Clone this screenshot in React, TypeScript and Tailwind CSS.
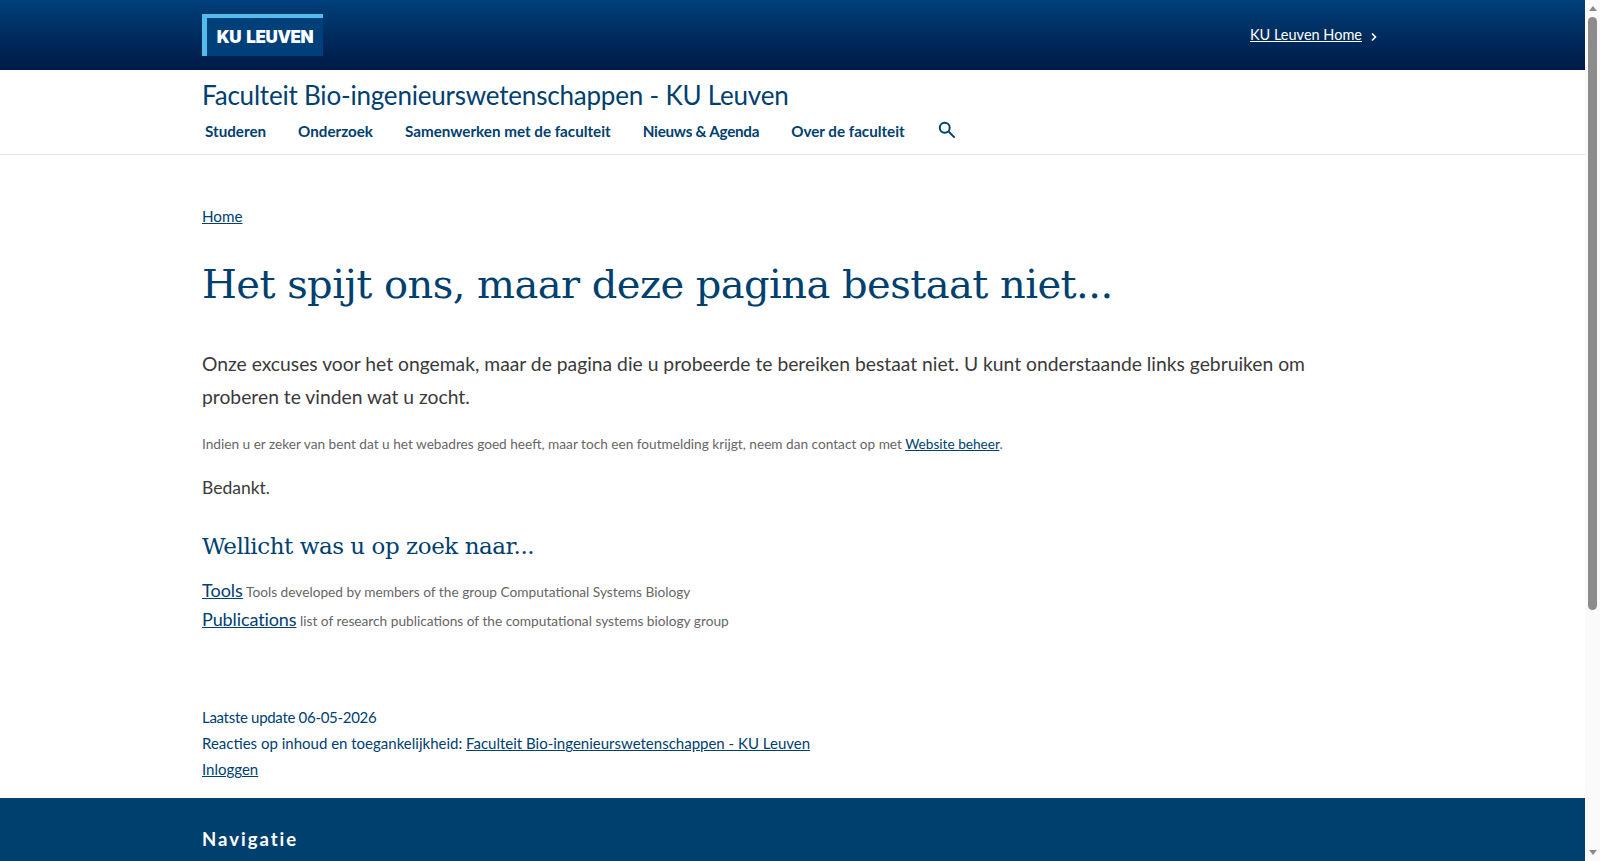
import React from "react";

const sans = "font-['Lato','Noto_Sans',sans-serif]";

export default function App() {
  return (
    <div className="flex h-[861px] w-full overflow-hidden bg-white">
      <div className={`flex h-full min-w-0 flex-1 flex-col overflow-hidden text-[#00406f] ${sans}`}>
        <header className="h-[70px] shrink-0 bg-gradient-to-b from-[#00407a] to-[#001a47]">
          <div className="flex h-full items-center justify-between pl-[202px] pr-[207px]">
            <div className="flex h-[42px] w-[121px] border-l-[5px] border-t-[4px] border-[#52bdec] bg-[#00407a] pt-[1px]">
              <span className="m-auto font-['Inter',sans-serif] text-[17px] font-black tracking-[-0.35px] text-white [word-spacing:2px]">KU LEUVEN</span>
            </div>
            <div className="flex items-center gap-[8px] text-[14.5px] text-white">
              <a className="underline">KU Leuven Home</a>
              <svg className="mt-[3px]" width="8" height="10" viewBox="0 0 8 10" fill="none" stroke="currentColor" strokeWidth="1.6"><path d="M2 1.5 5.5 5 2 8.5" /></svg>
            </div>
          </div>
        </header>
        <div className="shrink-0 border-b border-[#dce7f0] pl-[202px]">
          <div className="pt-[9px] text-[26px] leading-[32px] tracking-[-0.2px]">Faculteit Bio-ingenieurswetenschappen - KU Leuven</div>
          <nav className="mt-[4px] flex h-[39px] items-start gap-[32px] pl-[3px] text-[15.2px] font-bold">
            <span className="mt-[5px]">Studeren</span>
            <span className="mt-[5px]">Onderzoek</span>
            <span className="mt-[5px]">Samenwerken met de faculteit</span>
            <span className="mt-[5px] tracking-[-0.25px]">Nieuws &amp; Agenda</span>
            <span className="mt-[5px]">Over de faculteit</span>
            <svg className="ml-[1px] mt-[6px]" width="18" height="18" viewBox="0 0 20 20" fill="none" stroke="currentColor" strokeWidth="2.2"><circle cx="7.5" cy="7.5" r="5.5" /><path d="m12 12 6.5 6.5" /></svg>
          </nav>
        </div>
        <main className="flex-1 pl-[202px] pr-[240px]">
          <a className="mt-[50px] block text-[15.2px] underline">Home</a>
          <h1 className="mt-[28px] font-['DejaVu_Serif',serif] text-[40px] leading-[56px] tracking-[-0.55px]">Het spijt ons, maar deze pagina bestaat niet...</h1>
          <p className="mt-[35px] text-[19.3px] leading-[33.6px] text-[#3a3a3a]">Onze excuses voor het ongemak, maar de pagina die u probeerde te bereiken bestaat niet. U kunt onderstaande links gebruiken om proberen te vinden wat u zocht.</p>
          <p className="mt-[20px] text-[13.65px] text-[#666]">Indien u er zeker van bent dat u het webadres goed heeft, maar toch een foutmelding krijgt, neem dan contact op met <a className="text-[#00406f] underline">Website beheer</a>.</p>
          <p className="mt-[21px] text-[17.5px] text-[#3a3a3a]">Bedankt.</p>
          <h2 className="mt-[27px] font-['DejaVu_Serif',serif] text-[23px] tracking-[-0.45px]">Wellicht was u op zoek naar...</h2>
          <div className="mt-[14px] text-[13.7px] text-[#666]"><a className="text-[18px] text-[#00406f] underline">Tools</a> Tools developed by members of the group Computational Systems Biology</div>
          <div className="mt-[2px] text-[13.7px] text-[#666]"><a className="text-[18px] tracking-[-0.1px] text-[#00406f] underline">Publications</a> list of research publications of the computational systems biology group</div>
          <div className="mt-[71px] text-[15px] leading-[26px]">
            <div className="tracking-[-0.3px]">Laatste update 06-05-2026</div>
            <div>Reacties op inhoud en toegankelijkheid: <a className="underline">Faculteit Bio-ingenieurswetenschappen - KU Leuven</a></div>
            <a className="underline">Inloggen</a>
          </div>
        </main>
        <footer className="h-[63px] shrink-0 bg-[#00406f] pl-[202px] pt-[29px] text-[18.5px] font-bold leading-[24px] tracking-[2px] text-white">Navigatie</footer>
      </div>
      <div className="relative flex h-full w-[15px] shrink-0 flex-col items-center bg-[#fafafa]">
        <div className="mt-[6px] h-0 w-0 border-x-[4px] border-b-[5px] border-x-transparent border-b-[#8a8a8a]" />
        <div className="mt-[6px] h-[593px] w-[9px] rounded-full bg-[#8c8c8c]" />
        <div className="mb-[6px] mt-auto h-0 w-0 border-x-[4px] border-t-[5px] border-x-transparent border-t-[#8a8a8a]" />
      </div>
    </div>
  );
}
